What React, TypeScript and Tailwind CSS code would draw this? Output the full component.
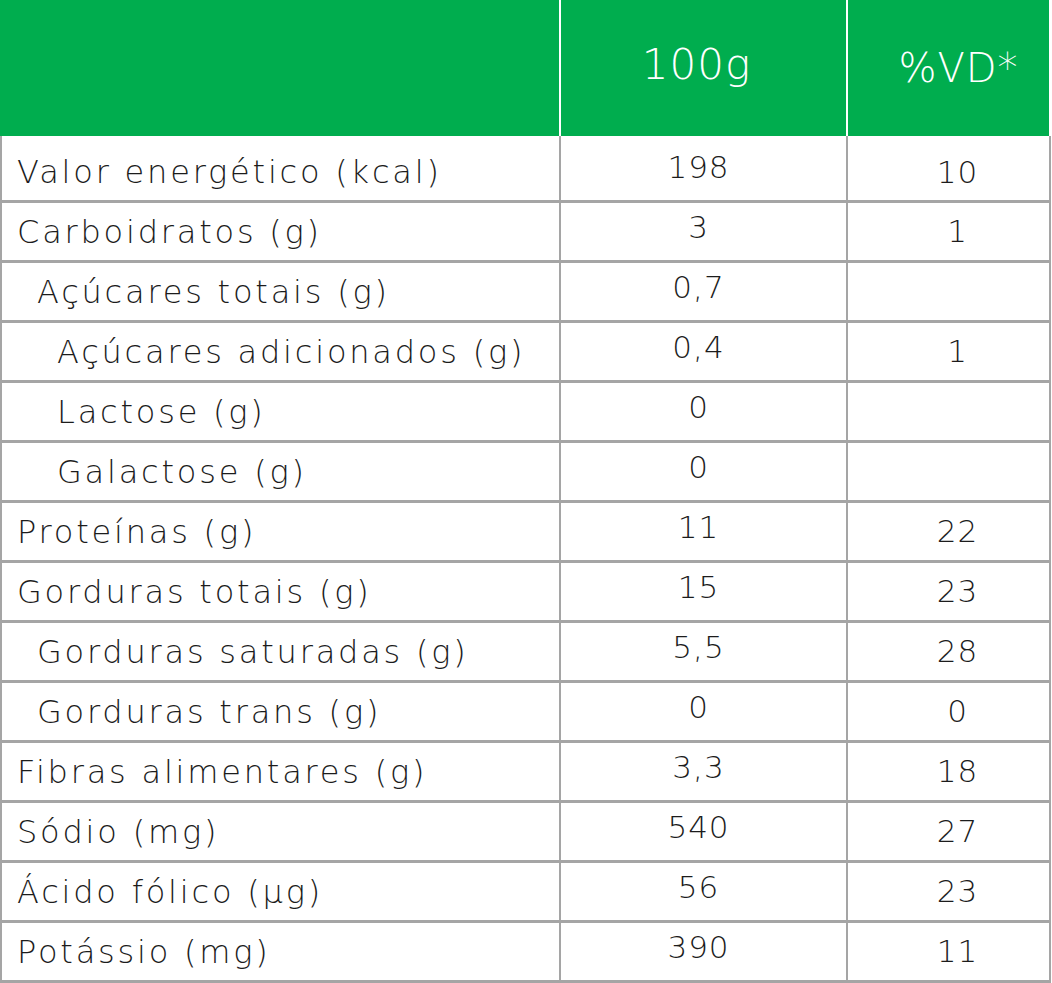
import React from "react";

type Row = {
  label: string;
  indent: 0 | 1 | 2;
  amount: string;
  vd: string;
};

const rows: Row[] = [
  { label: "Valor energético (kcal)", indent: 0, amount: "198", vd: "10" },
  { label: "Carboidratos (g)", indent: 0, amount: "3", vd: "1" },
  { label: "Açúcares totais (g)", indent: 1, amount: "0,7", vd: "" },
  { label: "Açúcares adicionados (g)", indent: 2, amount: "0,4", vd: "1" },
  { label: "Lactose (g)", indent: 2, amount: "0", vd: "" },
  { label: "Galactose (g)", indent: 2, amount: "0", vd: "" },
  { label: "Proteínas (g)", indent: 0, amount: "11", vd: "22" },
  { label: "Gorduras totais (g)", indent: 0, amount: "15", vd: "23" },
  { label: "Gorduras saturadas (g)", indent: 1, amount: "5,5", vd: "28" },
  { label: "Gorduras trans (g)", indent: 1, amount: "0", vd: "0" },
  { label: "Fibras alimentares (g)", indent: 0, amount: "3,3", vd: "18" },
  { label: "Sódio (mg)", indent: 0, amount: "540", vd: "27" },
  { label: "Ácido fólico (µg)", indent: 0, amount: "56", vd: "23" },
  { label: "Potássio (mg)", indent: 0, amount: "390", vd: "11" },
];

const indentClass = ["pl-[15px]", "pl-[35px]", "pl-[55px]"];

export default function App() {
  return (
    <div className="w-[1052px] bg-white font-['DejaVu_Sans',sans-serif] font-extralight text-[#1c1c1c]">
      {/* header */}
      <div className="flex h-[136px] w-[1049px] bg-[#00ad4e] text-white">
        <div className="w-[559px]" />
        <div className="flex w-[289px] items-center justify-center border-x-2 border-white pb-[8px] pr-[14px] text-[42px] tracking-[1px]">
          100g
        </div>
        <div className="flex flex-1 items-center justify-center pl-[20px] text-[40px] tracking-[1px]">
          %VD*
        </div>
      </div>

      {rows.map((r, i) => {
        const first = i === 0;
        return (
          <div
            key={r.label}
            className={`flex w-[1051px] border-x-2 border-b-[3px] border-[#a5a5a5] ${
              first ? "h-[67px]" : "h-[60px]"
            }`}
          >
            <div
              className={`flex w-[557px] items-center text-[32px] tracking-[2.8px] ${
                indentClass[r.indent]
              } ${first ? "pt-[8px]" : ""}`}
            >
              {r.label}
            </div>
            <div
              className={`flex w-[289px] items-center justify-center border-x-2 border-[#a5a5a5] pr-[10px] text-[31px] tracking-[1px] ${
                first ? "pb-[1px]" : "pb-[9px]"
              }`}
            >
              {r.amount}
            </div>
            <div
              className={`flex flex-1 items-center justify-center pl-[18px] text-[31px] tracking-[1px] ${
                first ? "pt-[8px]" : ""
              }`}
            >
              {r.vd}
            </div>
          </div>
        );
      })}
    </div>
  );
}
